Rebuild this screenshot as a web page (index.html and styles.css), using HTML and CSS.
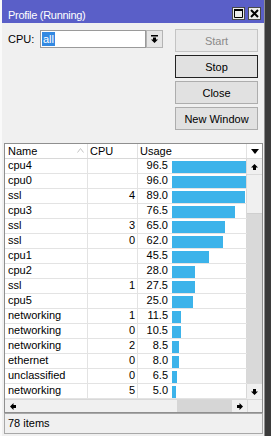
FILE: index.html
```html
<!DOCTYPE html>
<html lang="en">
<head>
    <meta charset="UTF-8">
    <title>Profile (Running)</title>
    <link rel="stylesheet" href="styles.css">
</head>
<body>
    <div class="screen">
        <div class="behind"></div>
        <div class="window">
            <div class="titlebar">
                <span class="title">Profile (Running)</span>
                <div class="title-buttons">
                    <span class="tbtn">
                        <svg width="9" height="9" viewBox="0 0 9 9"><path d="M0.5 1.5 H8.5 V8.5 H0.5 Z" fill="none" stroke="#000"/><rect x="0" y="0" width="9" height="2" fill="#000"/></svg>
                    </span>
                    <span class="tbtn">
                        <svg width="9" height="9" viewBox="0 0 9 9"><path d="M1 1 L8 8 M8 1 L1 8" stroke="#000" stroke-width="2"/></svg>
                    </span>
                </div>
            </div>

            <div class="content">
                <div class="top">
                    <div class="cpu-field">
                        <label for="cpu">CPU:</label>
                        <div class="combo">
                            <span class="combo-text" id="cpu"><span class="sel">all</span></span>
                            <span class="combo-btn">
                                <svg width="7" height="8" viewBox="0 0 7 8"><rect x="0" y="0" width="7" height="1.5"/><path d="M2 2.5 H5 V4.5 H7 L3.5 8 L0 4.5 H2 Z"/></svg>
                            </span>
                        </div>
                    </div>
                    <div class="actions">
                        <button class="btn" disabled>Start</button>
                        <button class="btn default">Stop</button>
                        <button class="btn">Close</button>
                        <button class="btn">New Window</button>
                    </div>
                </div>

                <div class="list">
                    <div class="list-head">
                        <div class="hcell name">Name
                            <svg class="sort" width="7" height="5" viewBox="0 0 7 5"><path d="M0.5 4.5 L3.5 0.5 L6.5 4.5" fill="none" stroke="#c4c4c4"/></svg>
                        </div>
                        <div class="hcell">CPU</div>
                        <div class="hcell">Usage</div>
                        <div class="hcell menu">
                            <svg width="8" height="5" viewBox="0 0 8 5"><path d="M0 0 H8 L4 5 Z"/></svg>
                        </div>
                    </div>
                    <div class="list-body">
                        <div class="rows" id="rows"></div>
                        <div class="vscroll">
                            <div class="arrow">
                                <svg width="7" height="6" viewBox="0 0 7 6"><path d="M3.5 0 L7 3.5 H5 V6 H2 V3.5 H0 Z"/></svg>
                            </div>
                            <div class="vthumb"></div>
                            <div class="vtrack"></div>
                            <div class="arrow">
                                <svg width="7" height="6" viewBox="0 0 7 6"><path d="M3.5 6 L7 2.5 H5 V0 H2 V2.5 H0 Z"/></svg>
                            </div>
                        </div>
                    </div>
                    <div class="hscroll">
                        <div class="arrow h">
                            <svg width="6" height="7" viewBox="0 0 6 7"><path d="M0 3.5 L3.5 0 V2 H6 V5 H3.5 V7 Z"/></svg>
                        </div>
                        <div class="hthumb"></div>
                        <div class="htrack"></div>
                        <div class="arrow h">
                            <svg width="6" height="7" viewBox="0 0 6 7"><path d="M6 3.5 L2.5 0 V2 H0 V5 H2.5 V7 Z"/></svg>
                        </div>
                        <div class="corner"></div>
                    </div>
                </div>

                <div class="status">78 items</div>
            </div>
        </div>
    </div>

    <script>
        const tasks = [
            ['cpu4', '', 96.5],
            ['cpu0', '', 96.0],
            ['ssl', '4', 89.0],
            ['cpu3', '', 76.5],
            ['ssl', '3', 65.0],
            ['ssl', '0', 62.0],
            ['cpu1', '', 45.5],
            ['cpu2', '', 28.0],
            ['ssl', '1', 27.5],
            ['cpu5', '', 25.0],
            ['networking', '1', 11.5],
            ['networking', '0', 10.5],
            ['networking', '2', 8.5],
            ['ethernet', '0', 8.0],
            ['unclassified', '0', 6.5],
            ['networking', '5', 5.0]
        ];

        // one row per task, bar width follows usage
        document.getElementById('rows').innerHTML = tasks.map(([name, cpu, usage]) => `
            <div class="row">
                <div class="cell name">${name}</div>
                <div class="cell cpu">${cpu}</div>
                <div class="cell usage">
                    <span class="num">${usage.toFixed(1)}</span>
                    <span class="bar" style="width:${Math.round(usage * 0.82)}px"></span>
                </div>
            </div>
        `).join('');
    </script>
</body>
</html>
```

FILE: styles.css
```css
* {
    box-sizing: border-box;
}
body {
    margin: 0;
    font-family: "Liberation Sans", Arial, sans-serif;
    font-size: 11px;
    color: #000;
    background-color: #3b3b3b;
}
.screen {
    display: flex;
    height: 436px;
    overflow: hidden;
}
.behind {
    width: 2px;
    background-color: #fafafa;
}
.window {
    width: 263px;
    background-color: #f0f0f0;
    border-right: 1px solid #8e8e8e;
    display: flex;
    flex-direction: column;
}
.titlebar {
    height: 23px;
    flex-shrink: 0;
    background-color: #5a5fc8;
    color: #fff;
    display: flex;
    justify-content: space-between;
    padding: 0 3px 0 6px;
}
.title {
    padding-top: 8px;
    line-height: 14px;
    letter-spacing: -0.3px;
}
.title-buttons {
    display: flex;
    gap: 3px;
    padding-top: 7px;
}
.tbtn {
    width: 13px;
    height: 13px;
    background-color: #ececec;
    border: 1px solid #4a4a4a;
    display: flex;
    align-items: center;
    justify-content: center;
}
.content {
    padding: 6px 0 0 2px;
    display: flex;
    flex-direction: column;
}
.top {
    display: flex;
    justify-content: space-between;
    padding-right: 6px;
}
.cpu-field {
    display: flex;
    align-items: flex-start;
    padding-left: 4px;
}
.cpu-field label {
    width: 32px;
    line-height: 18px;
    margin-top: 1px;
}
.combo {
    display: flex;
    margin-top: 1px;
}
.combo-text {
    width: 106px;
    height: 18px;
    background-color: #fff;
    border: 1px solid #9a9a9a;
    padding: 1px 0 0 1px;
}
.sel {
    display: inline-block;
    background-color: #3389e2;
    color: #fff;
    line-height: 14px;
    padding: 0 1px 0 1px;
}
.combo-btn {
    width: 17px;
    height: 18px;
    background-color: #e6e6e6;
    border: 1px solid #b4b4b4;
    display: flex;
    align-items: center;
    justify-content: center;
}
.actions {
    display: flex;
    flex-direction: column;
    gap: 3px;
}
.btn {
    width: 83px;
    height: 23px;
    font-family: inherit;
    font-size: 11px;
    color: #000;
    background-color: #e1e1e1;
    border: 1px solid #adadad;
    padding: 0;
}
.btn:disabled {
    color: #8a8a8a;
    background-color: #e9e9e9;
    border-color: #c4c4c4;
}
.btn.default {
    border-color: #222;
}
.list {
    margin-top: 13px;
    width: 259px;
    border: 1px solid #8f8f8f;
    background-color: #fff;
}
.list-head {
    display: grid;
    grid-template-columns: 83px 50px 109px 15px;
    height: 15px;
    border-bottom: 1px solid #d8d8d8;
}
.hcell {
    line-height: 14px;
    padding-left: 2px;
    border-right: 1px solid #e2e2e2;
    position: relative;
}
.hcell.name {
    padding-left: 3px;
}
.hcell .sort {
    position: absolute;
    left: 72px;
    top: 4px;
}
.hcell.menu {
    border-right: none;
    display: flex;
    align-items: center;
    justify-content: center;
    padding: 0;
}
.list-body {
    display: flex;
}
.rows {
    width: 242px;
}
.row {
    display: grid;
    grid-template-columns: 83px 50px 109px;
    height: 15px;
    border-bottom: 1px solid #e3e3e3;
}
.cell {
    line-height: 13px;
    border-right: 1px solid #e3e3e3;
    overflow: hidden;
    white-space: nowrap;
}
.cell.name {
    padding-left: 3px;
}
.cell.cpu {
    text-align: right;
    padding-right: 2px;
}
.cell.usage {
    display: flex;
    border-right-color: #d8d8d8;
}
.num {
    width: 30px;
    flex-shrink: 0;
    text-align: right;
}
.bar {
    flex-shrink: 0;
    align-self: flex-end;
    height: 12px;
    margin-left: 4px;
    background-color: #3cb3ea;
}
.vscroll {
    width: 15px;
    display: flex;
    flex-direction: column;
    background-color: #d9d9d9;
}
.arrow {
    height: 15px;
    flex-shrink: 0;
    background-color: #f0f0f0;
    display: flex;
    align-items: center;
    justify-content: center;
}
.vthumb {
    height: 40px;
    background-color: #f0f0f0;
    border-top: 1px solid #dadada;
    border-bottom: 1px solid #cfcfcf;
}
.vtrack {
    flex: 1;
}
.hscroll {
    display: flex;
    height: 13px;
    border-top: 1px solid #d8d8d8;
    background-color: #f0f0f0;
}
.arrow.h {
    width: 15px;
    height: auto;
}
.hthumb {
    width: 157px;
}
.htrack {
    width: 55px;
    background-color: #d6d6d6;
}
.corner {
    width: 15px;
    border-left: 1px solid #dadada;
}
.status {
    width: 259px;
    height: 21px;
    border: 1px solid #a8a8a8;
    line-height: 19px;
    padding-left: 3px;
}
```
